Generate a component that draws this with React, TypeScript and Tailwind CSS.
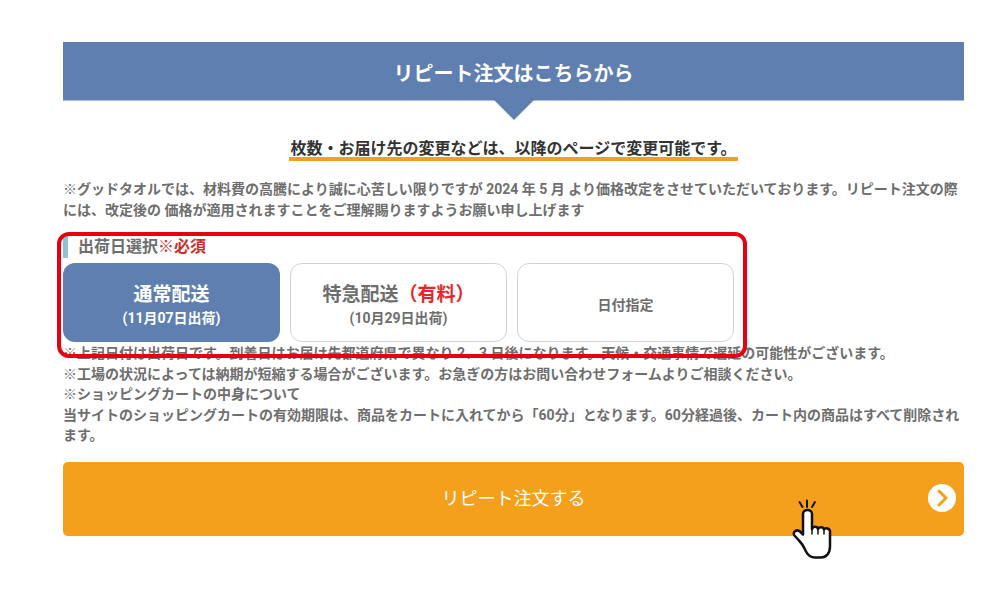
const jp = "font-['Roboto','Noto_Sans_CJK_JP',sans-serif]";

function Hand() {
  return (
    <svg className="absolute left-[790px] top-[499px]" width="46" height="64" viewBox="0 0 46 64" fill="none">
      <path d="M9.500 3l3 5M17 1.500V8M25 3l-3 5" stroke="#111" strokeWidth="2" strokeLinecap="round" />
      <path
        d="M13 15c0-5.500 9-5.500 9 0v15c1-3 5.500-3 6 0 1-2.500 5.500-2.500 6 .5 1-2 6-1.500 6 2v15c0 7-4 11-9 11h-6c-5 0-7-2-9-6-2-4-3-7-7-11l-4.500-5c-2.500-3 2-7 5.500-4l3 3z"
        fill="#fff"
        stroke="#111"
        strokeWidth="2.500"
        strokeLinejoin="round"
      />
      <path d="M22 30v5M28 30v5M34 31v4" stroke="#111" strokeWidth="1.500" strokeLinecap="round" />
    </svg>
  );
}

export default function App() {
  return (
    <main className={`relative h-[593px] w-[1000px] overflow-hidden bg-white ${jp}`}>
      <div className="ml-[63px] w-[901px] pt-[42px]">
        {/* 見出し */}
        <div className="relative flex h-[59px] items-center justify-center border-b border-[#a9bdd8] bg-[#5e7fb0] pt-[5px]">
          <h2 className="text-[20px] font-bold text-white">リピート注文はこちらから</h2>
          <div className="absolute left-1/2 top-[58px] h-0 w-0 -translate-x-1/2 border-x-[20px] border-t-[20px] border-x-transparent border-t-[#5e7fb0]" />
        </div>

        <div className="mt-[36px] text-center">
          <span className="inline-block border-b-[4px] border-[#f5a01c] px-[1px] text-[16px] font-bold leading-[17px] text-[#333]">
            枚数・お届け先の変更などは、以降のページで変更可能です。
          </span>
        </div>

        <p className="mt-[18px] text-[14px] font-bold leading-[21px] text-[#6e6e6e]">
          ※グッドタオルでは、材料費の高騰により誠に心苦しい限りですが 2024 年 5 月 より価格改定をさせていただいております。リピート注文の際には、改定後の 価格が適用されますことをご理解賜りますようお願い申し上げます
        </p>

        {/* 出荷日選択 */}
        <div className="mt-[15px] flex h-[22px] items-center border-l-[5px] border-[#8fc3cf] pl-[10px] text-[16px] font-bold text-[#6e6e6e]">
          出荷日選択<span className="text-[#c9302c]">※必須</span>
        </div>
        <div className="mt-[5px] flex gap-[10px]">
          <div className="flex h-[79px] w-[217px] flex-col items-center justify-center rounded-[12px] bg-[#5e7fb0] pt-[4px] text-white">
            <div className="text-[19px] font-bold leading-[26px]">通常配送</div>
            <div className="text-[14px] font-bold leading-[20px]">(11月07日出荷)</div>
          </div>
          <div className="flex h-[79px] w-[217px] flex-col items-center justify-center rounded-[12px] border border-[#d2d2d2] bg-white pt-[4px] text-[#6e6e6e]">
            <div className="text-[19px] font-bold leading-[26px]">
              特急配送<span className="text-[#e8262a]">（有料）</span>
            </div>
            <div className="text-[14px] font-bold leading-[20px]">(10月29日出荷)</div>
          </div>
          <div className="flex h-[79px] w-[217px] items-center justify-center rounded-[12px] border border-[#d2d2d2] bg-white pt-[5px] text-[14px] font-bold text-[#6e6e6e]">
            日付指定
          </div>
        </div>

        <div className="mt-[1px] text-[14px] font-bold leading-[20.500px] text-[#6e6e6e]">
          <p>※上記日付は出荷日です。到着日はお届け先都道府県で異なり 2、3 日後になります。天候・交通事情で遅延の可能性がございます。</p>
          <p>※工場の状況によっては納期が短縮する場合がございます。お急ぎの方はお問い合わせフォームよりご相談ください。</p>
          <p>※ショッピングカートの中身について</p>
          <p>当サイトのショッピングカートの有効期限は、商品をカートに入れてから「60分」となります。60分経過後、カート内の商品はすべて削除されます。</p>
        </div>

        {/* ボタン */}
        <div className="relative mt-[16px] flex h-[74px] items-center justify-center rounded-[5px] bg-[#f5a01c]">
          <span className="text-[18px] text-white">リピート注文する</span>
          <svg className="absolute right-[8px] top-[22px]" width="28" height="28" viewBox="0 0 28 28">
            <circle cx="14" cy="14" r="14" fill="#fff" />
            <path d="M11 7l7 7-7 7" fill="none" stroke="#f5a01c" strokeWidth="3" strokeLinecap="round" strokeLinejoin="round" />
          </svg>
        </div>
      </div>

      {/* 赤枠の注釈 */}
      <div className="absolute left-[57px] top-[232px] h-[126px] w-[690px] rounded-[12px] border-[4px] border-[#e60012]" />
      <Hand />
    </main>
  );
}
